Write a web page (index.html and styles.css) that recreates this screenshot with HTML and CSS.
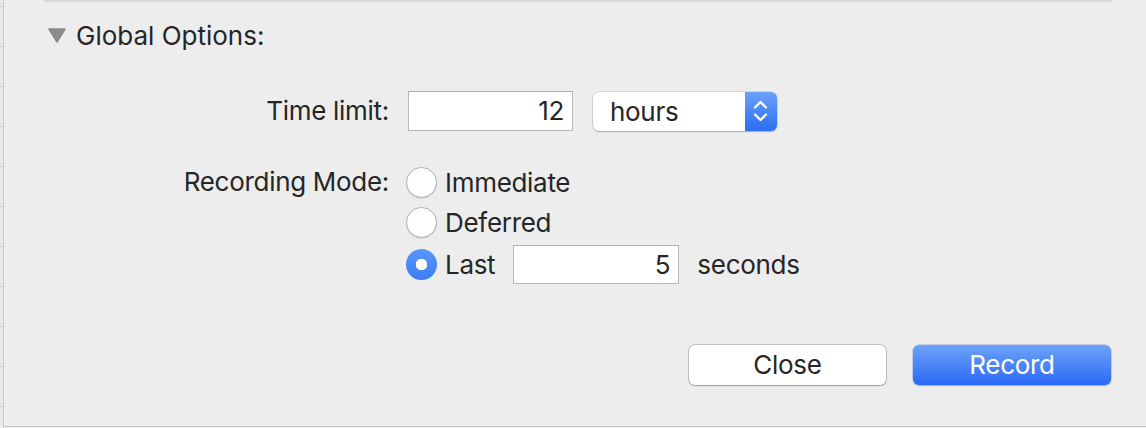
FILE: index.html
```html
<!DOCTYPE html>
<html>
<head>
<meta charset="utf-8">
<link rel="stylesheet" href="styles.css">
</head>
<body>
<div class="window">
  <div class="ruler"></div>
  <div class="panel">
    <div class="sep"></div>
    <div class="disclosure">
      <svg class="tri" width="18" height="15" viewBox="0 0 18 15"><polygon points="1,1 17,1 9,14" fill="#8a8a8a" stroke="#8a8a8a" stroke-width="1.5" stroke-linejoin="round"/></svg>
      <span>Global Options:</span>
    </div>
    <div class="form">
      <div class="lbl">Time limit:</div>
      <div class="ctl time-row">
        <div class="field time-field">12</div>
        <div class="popup">
          <span class="popup-text">hours</span>
          <span class="popup-arrows">
            <svg width="32" height="40" viewBox="0 0 32 40"><polyline points="10,16.5 15.5,11 21,16.5" fill="none" stroke="#fff" stroke-width="2.3" stroke-linecap="round" stroke-linejoin="round"/><polyline points="10,23.5 15.5,29 21,23.5" fill="none" stroke="#fff" stroke-width="2.3" stroke-linecap="round" stroke-linejoin="round"/></svg>
          </span>
        </div>
      </div>
      <div class="lbl">Recording Mode:</div>
      <div class="radios">
        <div class="radio-row"><span class="radio"></span><span class="rlabel">Immediate</span></div>
        <div class="radio-row"><span class="radio"></span><span class="rlabel">Deferred</span></div>
        <div class="radio-row last-row"><span class="radio on"></span><span class="rlabel">Last</span><div class="field last-field">5</div><span class="unit">seconds</span></div>
      </div>
    </div>
    <div class="buttons">
      <button class="btn">Close</button>
      <button class="btn primary">Record</button>
    </div>
  </div>
</div>
</body>
</html>
```
FILE: styles.css
```css
html, body {
  margin: 0;
  padding: 0;
}
body {
  background: #ededed;
  font-family: Inter, "Liberation Sans", sans-serif;
  font-size: 26px;
  letter-spacing: -0.3px;
  color: #262626;
}
.window {
  display: flex;
  width: 1146px;
  height: 428px;
}
.ruler {
  width: 3px;
  height: 427px;
  border-right: 1px solid #cacaca;
  background: #e9e9e9 repeating-linear-gradient(to bottom, transparent 0 6px, #cbcbcb 6px 7px, transparent 7px 40px);
}
.panel {
  flex: 1;
  height: 426px;
  border-bottom: 1px solid #c4c4c4;
  display: flex;
  flex-direction: column;
}
.sep {
  height: 2px;
  margin: 0 34px 0 40px;
  background: #d8d8d8;
}
.disclosure {
  display: flex;
  align-items: center;
  height: 40px;
  margin-top: 13px;
  padding-left: 44px;
  gap: 10px;
  letter-spacing: 0;
}
.tri {
  display: block;
}
.form {
  display: grid;
  grid-template-columns: 385px auto;
  column-gap: 17px;
  row-gap: 31px;
  margin-top: 36px;
  align-items: start;
}
.lbl {
  text-align: right;
  height: 40px;
  line-height: 40px;
}
.time-row {
  display: flex;
  align-items: center;
  gap: 20px;
  padding-left: 2px;
}
.field {
  box-sizing: border-box;
  height: 40px;
  background: #fff;
  border: 1px solid #b9b9b9;
  border-top-color: #aeaeae;
  text-align: right;
  line-height: 38px;
  padding-right: 8px;
}
.time-field {
  width: 165px;
}
.popup {
  display: flex;
  width: 184px;
  height: 39px;
  border-radius: 6px;
  background: #fff;
  box-shadow: 0 0 0 0.5px rgba(0,0,0,0.18), 0 1px 1.5px rgba(0,0,0,0.22);
  overflow: hidden;
}
.popup-text {
  flex: 1;
  padding-left: 17px;
  line-height: 39px;
}
.popup-arrows {
  width: 32px;
  height: 39px;
  background: linear-gradient(to bottom, #6ba1f8, #2d6cf5);
  display: flex;
  align-items: center;
  justify-content: center;
}
.popup-arrows svg {
  display: block;
}
.radios {
  display: flex;
  flex-direction: column;
}
.radio-row {
  display: flex;
  align-items: center;
  height: 40px;
}
.last-row {
  margin-top: 2px;
}
.radio {
  box-sizing: border-box;
  width: 31px;
  height: 31px;
  border-radius: 50%;
  background: #fff;
  border: 1px solid #b3b3b3;
  box-shadow: inset 0 -1px 1px rgba(0,0,0,0.04), 0 0.5px 1px rgba(0,0,0,0.15);
  margin-right: 8px;
  flex: none;
}
.radio.on {
  border: none;
  background: radial-gradient(circle, #fff 0 5.5px, transparent 6px), linear-gradient(to bottom, #5a96f6, #3b7ff4);
  box-shadow: none;
}
.last-field {
  width: 166px;
  height: 39px;
  line-height: 37px;
  margin-left: 18px;
}
.unit {
  margin-left: 18px;
}
.buttons {
  display: flex;
  justify-content: flex-end;
  gap: 27px;
  margin-top: auto;
  margin-bottom: 41px;
  padding-right: 35px;
}
.btn {
  font-family: inherit;
  font-size: 26px;
  letter-spacing: -0.3px;
  color: #262626;
  height: 40px;
  width: 197px;
  border-radius: 6px;
  border: none;
  background: #fff;
  box-shadow: 0 0 0 1px rgba(0,0,0,0.17), 0 1px 1.5px rgba(0,0,0,0.2);
  padding: 0;
  line-height: 40px;
}
.btn.primary {
  width: 198px;
  color: #fff;
  background: linear-gradient(to bottom, #6ea2f8, #2a69f5);
  box-shadow: 0 0 0 0.5px rgba(40,90,220,0.4), 0 1px 1.5px rgba(0,0,0,0.18);
}
```
